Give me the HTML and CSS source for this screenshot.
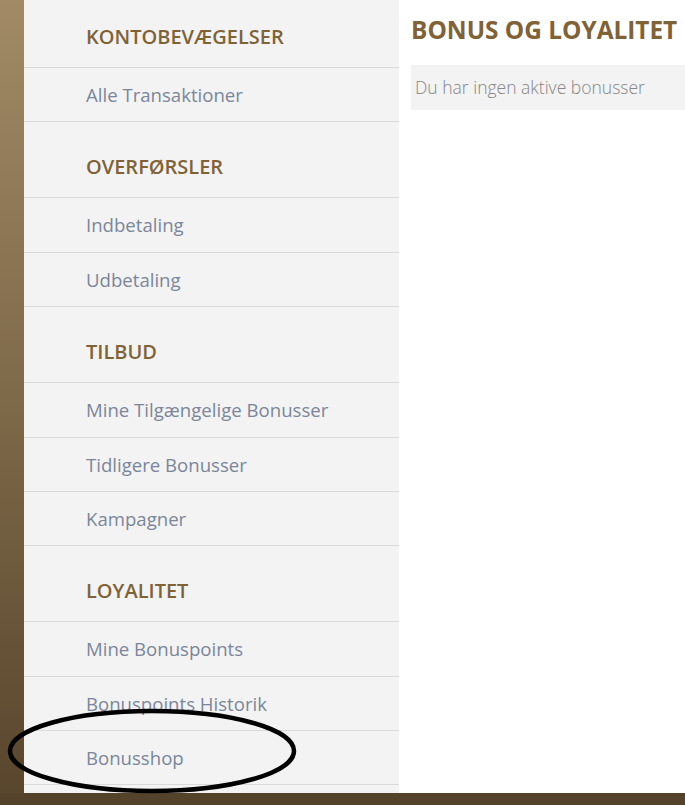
FILE: index.html
```html
<!DOCTYPE html>
<html lang="da">
<head>
  <meta charset="UTF-8" />
  <meta name="viewport" content="width=device-width, initial-scale=1.0"/>
  <title>Bonus og Loyalitet</title>
  <link rel="stylesheet" href="styles.css">
</head>
<body>
  <div class="page">
    <div class="edge"></div>

    <div class="sidebar">
      <div class="menu-title first">KONTOBEVÆGELSER</div>
      <a class="menu-link" href="#">Alle Transaktioner</a>

      <div class="menu-title">OVERFØRSLER</div>
      <a class="menu-link" href="#">Indbetaling</a>
      <a class="menu-link" href="#">Udbetaling</a>

      <div class="menu-title">TILBUD</div>
      <a class="menu-link" href="#">Mine Tilgængelige Bonusser</a>
      <a class="menu-link" href="#">Tidligere Bonusser</a>
      <a class="menu-link" href="#">Kampagner</a>

      <div class="menu-title">LOYALITET</div>
      <a class="menu-link" href="#">Mine Bonuspoints</a>
      <a class="menu-link" href="#">Bonuspoints Historik</a>
      <a class="menu-link" href="#">Bonusshop</a>
      <a class="menu-link" href="#">&nbsp;</a>
    </div>

    <div class="content">
      <h1 class="title">BONUS OG LOYALITET</h1>
      <div class="notice">Du har ingen aktive bonusser</div>
    </div>
  </div>

  <div class="footer-bar"></div>

  <!-- markering rundt om Bonusshop -->
  <svg class="mark" width="310" height="100" viewBox="0 0 310 100">
    <ellipse cx="152" cy="51" rx="142" ry="40" fill="none" stroke="#000" stroke-width="4.5"/>
  </svg>
</body>
</html>
```

FILE: styles.css
```css
body {
  font-family: 'Open Sans', sans-serif;
  background-color: #fff;
  margin: 0;
  padding: 0;
  overflow: hidden;
  position: relative;
}

.page {
  display: grid;
  grid-template-columns: 24px 375px 1fr;
  height: 793px;
  overflow: hidden;
}

.edge {
  background: linear-gradient(to bottom, #a18a65 0%, #7c6747 50%, #54422a 100%);
}

.sidebar {
  background-color: #f3f3f3;
  display: flex;
  flex-direction: column;
}

.menu-title {
  font-size: 20px;
  font-weight: 600;
  line-height: 24px;
  color: #7f6336;
  padding: 33px 0 18px 62px;
  border-bottom: 1px solid #d9d9d9;
}

.menu-title.first {
  padding-top: 25px;
}

.menu-link {
  display: block;
  font-size: 18.6px;
  line-height: 25px;
  color: #7b869a;
  text-decoration: none;
  padding: 14px 0 14px 62px;
  border-bottom: 1px solid #d9d9d9;
  flex-shrink: 0;
}

.menu-title + .menu-link {
  padding-bottom: 15px;
}

.menu-title.first + .menu-link {
  padding-bottom: 14px;
}

.content {
  padding-left: 12px;
}

.title {
  margin: 14px 0 19px 0;
  font-size: 24.4px;
  font-weight: 700;
  line-height: 32px;
  color: #7f6336;
}

.notice {
  background-color: #f3f3f3;
  font-size: 17.5px;
  font-weight: 300;
  line-height: 45px;
  color: #868686;
  padding-left: 4px;
}

.footer-bar {
  height: 12px;
  background-color: #54422a;
}

.mark {
  position: absolute;
  left: 0;
  top: 700px;
}
```
